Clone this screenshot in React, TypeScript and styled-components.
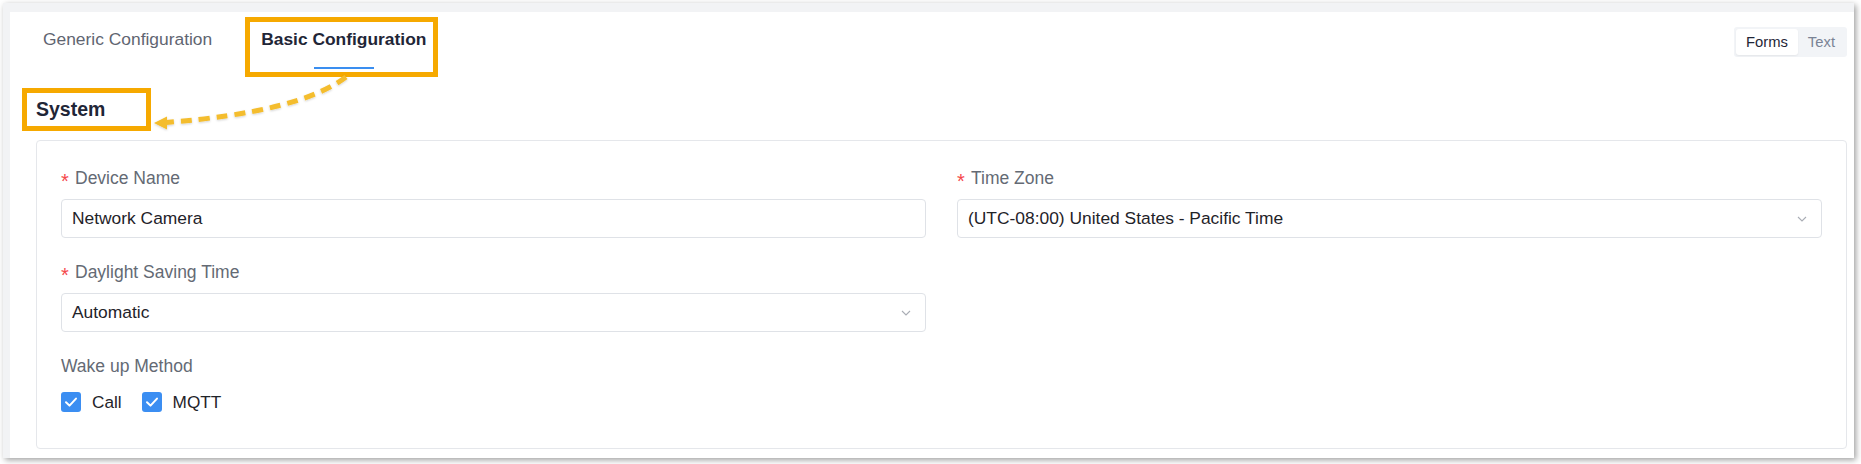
import React from "react";
import styled, { createGlobalStyle, css } from "styled-components";

const GlobalStyle = createGlobalStyle`
  html, body { margin: 0; padding: 0; background: #ffffff; }
  body { font-family: "Liberation Sans", Arial, Helvetica, sans-serif; }
  * { box-sizing: border-box; }
`;

const Page = styled.div`
  position: relative;
  width: 1861px;
  height: 464px;
  padding: 3px 0 0 3px;
  overflow: hidden;
`;

const Frame = styled.div`
  width: 1851px;
  height: 455px;
  background: #f2f3f5;
  padding: 9px 0 0 7px;
  box-shadow: 2px 2px 6px rgba(0, 0, 0, 0.38);
`;

const Panel = styled.div`
  height: 100%;
  background: #ffffff;
  padding: 0 7px 0 26px;
`;

const Header = styled.div`
  display: flex;
  justify-content: space-between;
  align-items: flex-start;
`;

const TabList = styled.div`
  display: flex;
  gap: 49px;
  margin-left: 7px;
`;

const Tab = styled.div<{ $active?: boolean }>`
  position: relative;
  padding: 15px 0 18px;
  font-size: 17.4px;
  line-height: 24px;
  color: #5f6571;
  white-space: nowrap;
  ${(p) =>
    p.$active &&
    css`
      font-weight: 700;
      color: #1f2637;
      &::after {
        content: "";
        position: absolute;
        left: 50%;
        bottom: 0;
        width: 60px;
        height: 2px;
        margin-left: -30px;
        background: #3a8ef0;
      }
    `}
`;

const Highlight = styled.span<{ $l: number; $t: number; $w: number; $h: number }>`
  position: absolute;
  left: ${(p) => p.$l}px;
  top: ${(p) => p.$t}px;
  width: ${(p) => p.$w}px;
  height: ${(p) => p.$h}px;
  border: 5px solid #f6a900;
  pointer-events: none;
`;

const Toggle = styled.div`
  display: flex;
  margin-top: 15px;
  padding: 2px;
  background: #f2f4f7;
  border-radius: 3px;
`;

const ToggleBtn = styled.div<{ $active?: boolean }>`
  height: 26px;
  padding: 0 10px;
  display: flex;
  align-items: center;
  font-size: 14.8px;
  border-radius: 3px;
  color: ${(p) => (p.$active ? "#1f2637" : "#7a8395")};
  background: ${(p) => (p.$active ? "#ffffff" : "transparent")};
  box-shadow: ${(p) => (p.$active ? "0 1px 2px rgba(0,0,0,0.06)" : "none")};
`;

const SectionTitle = styled.div`
  position: relative;
  display: inline-block;
  margin-top: 27px;
  font-size: 19.5px;
  line-height: 26px;
  font-weight: 700;
  color: #1f2637;
`;

const Card = styled.div`
  margin-top: 18px;
  border: 1px solid #e5e7eb;
  border-radius: 4px;
  padding: 25px 24px 34px;
`;

const FormGrid = styled.div`
  display: grid;
  grid-template-columns: 1fr 1fr;
  column-gap: 31px;
  row-gap: 22px;
`;

const FormItem = styled.div`
  display: flex;
  flex-direction: column;
`;

const Label = styled.div`
  display: flex;
  align-items: center;
  height: 24px;
  margin-bottom: 9px;
  font-size: 17.5px;
  color: #646a74;
  white-space: nowrap;
`;

const Required = styled.span`
  position: relative;
  top: 3px;
  width: 14px;
  color: #f5474b;
  font-size: 20px;
  line-height: 24px;
`;

const Field = styled.div`
  position: relative;
  height: 39px;
  border: 1px solid #dfe2e7;
  border-radius: 4px;
  padding: 0 10px;
  display: flex;
  align-items: center;
  justify-content: space-between;
  font-size: 17.4px;
  color: #1f2329;
`;

const Chevron = styled.svg`
  width: 10px;
  height: 6px;
  margin-right: 4px;
`;

const CheckRow = styled.div`
  display: flex;
  align-items: center;
  height: 24px;
  margin-top: 3px;
  gap: 20px;
`;

const CheckItem = styled.label`
  display: flex;
  align-items: center;
  gap: 11px;
  font-size: 17.2px;
  color: #1f2329;
`;

const Box = styled.span`
  width: 20px;
  height: 20px;
  border-radius: 3px;
  background: #3b8ef2;
  display: flex;
  align-items: center;
  justify-content: center;
`;

const Arrow = styled.svg`
  position: absolute;
  left: 0;
  top: 0;
  pointer-events: none;
  overflow: visible;
`;

const ChevronIcon = () => (
  <Chevron viewBox="0 0 10 6">
    <polyline points="1,1 5,5 9,1" fill="none" stroke="#a9adb5" strokeWidth="1.1" />
  </Chevron>
);

const Check = ({ label }: { label: string }) => (
  <CheckItem>
    <Box>
      <svg width="20" height="20" viewBox="0 0 20 20">
        <polyline points="5,10.2 8.5,13.6 15,6.6" fill="none" stroke="#ffffff" strokeWidth="2" strokeLinecap="round" strokeLinejoin="round" />
      </svg>
    </Box>
    {label}
  </CheckItem>
);

export default function App() {
  return (
    <>
      <GlobalStyle />
      <Page>
        <Frame>
          <Panel>
            <Header>
              <TabList>
                <Tab>Generic Configuration</Tab>
                <Tab $active>
                  Basic Configuration
                  <Highlight $l={-16} $t={5} $w={193} $h={60} />
                </Tab>
              </TabList>
              <Toggle>
                <ToggleBtn $active>Forms</ToggleBtn>
                <ToggleBtn>Text</ToggleBtn>
              </Toggle>
            </Header>
            <SectionTitle>
              System
              <Highlight $l={-14} $t={-8} $w={129} $h={43} />
            </SectionTitle>
            <Card>
              <FormGrid>
                <FormItem>
                  <Label>
                    <Required>*</Required>Device Name
                  </Label>
                  <Field>Network Camera</Field>
                </FormItem>
                <FormItem>
                  <Label>
                    <Required>*</Required>Time Zone
                  </Label>
                  <Field>
                    (UTC-08:00) United States - Pacific Time
                    <ChevronIcon />
                  </Field>
                </FormItem>
                <FormItem>
                  <Label>
                    <Required>*</Required>Daylight Saving Time
                  </Label>
                  <Field>
                    Automatic
                    <ChevronIcon />
                  </Field>
                </FormItem>
                <div />
                <FormItem>
                  <Label>Wake up Method</Label>
                  <CheckRow>
                    <Check label="Call" />
                    <Check label="MQTT" />
                  </CheckRow>
                </FormItem>
              </FormGrid>
            </Card>
          </Panel>
        </Frame>
        <Arrow width="400" height="140" viewBox="0 0 400 140">
          <defs>
            <filter id="sh" x="-10%" y="-30%" width="120%" height="160%">
              <feDropShadow dx="0" dy="1" stdDeviation="1" floodColor="#000" floodOpacity="0.18" />
            </filter>
          </defs>
          <g filter="url(#sh)">
            <path
              d="M346 77 Q 300 112 166 122.5"
              fill="none"
              stroke="#f4bd2e"
              strokeWidth="5"
              strokeDasharray="11 7"
            />
            <polygon points="154,123 167,116.5 167,129.5" fill="#f4bd2e" />
          </g>
        </Arrow>
      </Page>
    </>
  );
}
